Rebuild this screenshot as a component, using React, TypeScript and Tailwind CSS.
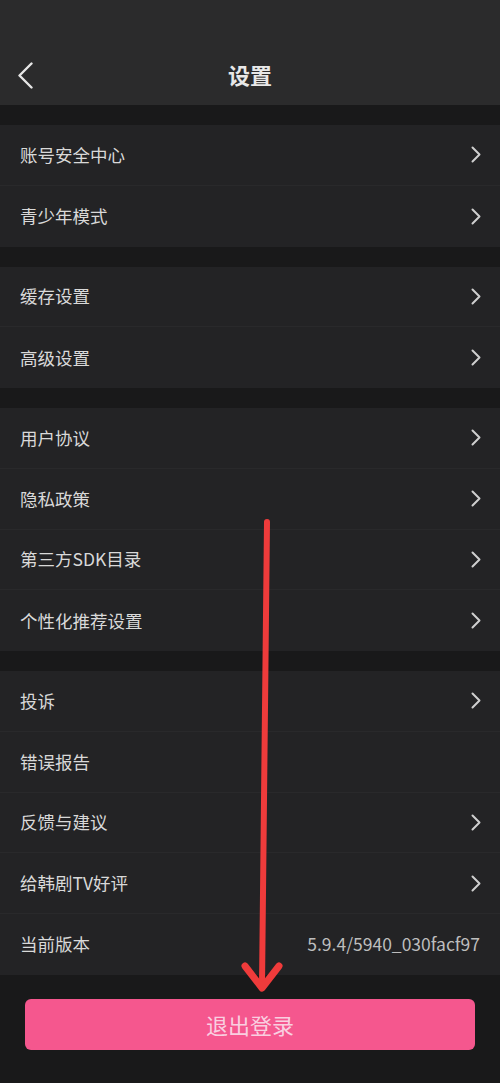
import React from "react";

type Item = {
  label: string;
  arrow?: boolean;
  value?: string;
};

const groups: Item[][] = [
  [
    { label: "账号安全中心", arrow: true },
    { label: "青少年模式", arrow: true },
  ],
  [
    { label: "缓存设置", arrow: true },
    { label: "高级设置", arrow: true },
  ],
  [
    { label: "用户协议", arrow: true },
    { label: "隐私政策", arrow: true },
    { label: "第三方SDK目录", arrow: true },
    { label: "个性化推荐设置", arrow: true },
  ],
  [
    { label: "投诉", arrow: true },
    { label: "错误报告" },
    { label: "反馈与建议", arrow: true },
    { label: "给韩剧TV好评", arrow: true },
    { label: "当前版本", value: "5.9.4/5940_030facf97" },
  ],
];

const Chevron = () => (
  <svg width="10" height="17" viewBox="0 0 10 17" fill="none">
    <path
      d="M1.5 1.5L8.5 8.5L1.5 15.5"
      stroke="#cfcfcf"
      strokeWidth="2"
      strokeLinecap="round"
      strokeLinejoin="round"
    />
  </svg>
);

const Row: React.FC<{ item: Item; last: boolean }> = ({ item, last }) => (
  <div
    className={
      "flex h-[60.75px] items-center justify-between pl-5 pr-[19px] " +
      (last ? "" : "border-b border-[#29292b]")
    }
  >
    <span className="text-[17.5px] text-[#d9d9d9]">{item.label}</span>
    {item.arrow && <Chevron />}
    {item.value && (
      <span className="mr-[1px] text-[17.5px] text-[#bdbdbd]">{item.value}</span>
    )}
  </div>
);

export default function App() {
  return (
    <div
      className="relative flex h-[1083px] w-[500px] flex-col overflow-hidden bg-[#19191a]"
      style={{ fontFamily: '"Noto Sans CJK SC", "Noto Sans", sans-serif' }}
    >
      {/* header */}
      <div className="relative flex h-[105px] shrink-0 items-end justify-center bg-[#2b2b2c] pb-[14px]">
        <svg
          className="absolute left-[17px] top-[62px]"
          width="17"
          height="27"
          viewBox="0 0 17 27"
          fill="none"
        >
          <path
            d="M14.5 1.5L2.5 13.5L14.5 25.5"
            stroke="#e6e6e6"
            strokeWidth="2.4"
            strokeLinecap="round"
            strokeLinejoin="round"
          />
        </svg>
        <span className="text-[22px] font-bold text-[#e8e8e8]">设置</span>
      </div>

      <div className="flex flex-col gap-5 pt-5">
        {groups.map((g, gi) => (
          <div key={gi} className="bg-[#232325]">
            {g.map((item, i) => (
              <Row key={item.label} item={item} last={i === g.length - 1} />
            ))}
          </div>
        ))}
      </div>

      <div className="px-[25px] pt-[24px]">
        <button className="flex h-[51px] w-full items-center justify-center rounded-[6px] bg-[#f5578e] text-[22px] text-[#f9cfe0]">
          退出登录
        </button>
      </div>

      {/* red annotation arrow */}
      <svg
        className="pointer-events-none absolute left-0 top-0"
        width="500"
        height="1083"
        viewBox="0 0 500 1083"
      >
        <path
          d="M267 522L262 986"
          stroke="#ef3b3b"
          strokeWidth="6"
          strokeLinecap="round"
        />
        <path
          d="M245 966L262 988L279 966"
          stroke="#ef3b3b"
          strokeWidth="7"
          strokeLinecap="round"
          strokeLinejoin="round"
          fill="none"
        />
      </svg>
    </div>
  );
}
